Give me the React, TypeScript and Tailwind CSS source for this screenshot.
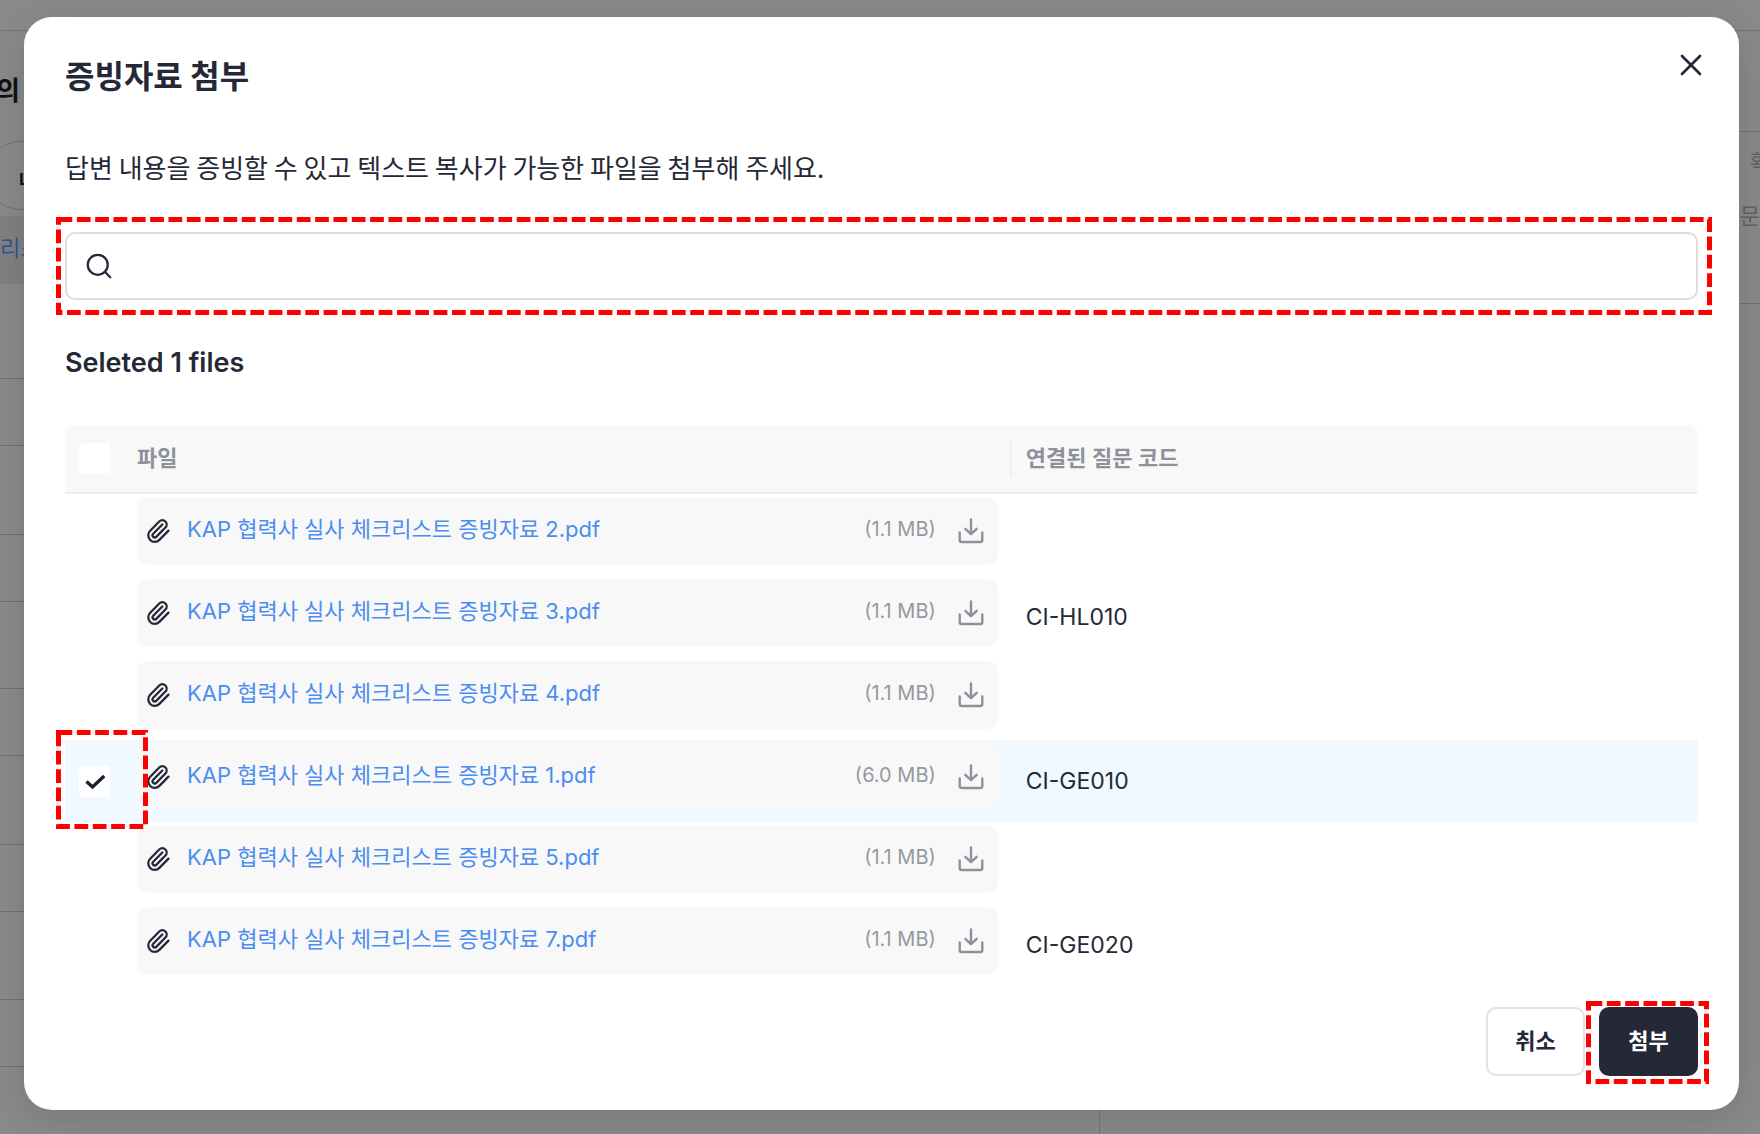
import React, { useState } from 'react';
import { Paperclip, Search, X } from 'lucide-react';

const files = [
  { name: 'KAP 협력사 실사 체크리스트 증빙자료 2.pdf', size: '1.1 MB', code: '' },
  { name: 'KAP 협력사 실사 체크리스트 증빙자료 3.pdf', size: '1.1 MB', code: 'CI-HL010' },
  { name: 'KAP 협력사 실사 체크리스트 증빙자료 4.pdf', size: '1.1 MB', code: '' },
  { name: 'KAP 협력사 실사 체크리스트 증빙자료 1.pdf', size: '6.0 MB', code: 'CI-GE010' },
  { name: 'KAP 협력사 실사 체크리스트 증빙자료 5.pdf', size: '1.1 MB', code: '' },
  { name: 'KAP 협력사 실사 체크리스트 증빙자료 7.pdf', size: '1.1 MB', code: 'CI-GE020' },
];

function DownloadIcon() {
  return (
    <svg width="26" height="26" viewBox="0 0 26 26" fill="none" stroke="#8e919b" strokeWidth="2.4" strokeLinecap="round" strokeLinejoin="round" aria-hidden="true">
      <path d="M13 1.500v14.500M7.300 10.800l5.700 5.400 5.700-5.400" />
      <path d="M1.700 14.500v7.500a2 2 0 0 0 2 2h18.600a2 2 0 0 0 2-2v-7.500" />
    </svg>
  );
}

// dashed red frame drawn around its relative parent
function Highlight({ className }: { className: string }) {
  return (
    <div className={`pointer-events-none absolute z-10 p-[2px] ${className}`}>
      <svg className="block h-full w-full overflow-visible" aria-hidden="true">
        <rect x="0.5" y="0.5" width="100%" height="100%" fill="none" stroke="#ff0000" strokeWidth="5" strokeDasharray="13.75 4.58" />
      </svg>
    </div>
  );
}

function CheckBox({ label, checked, onChange }: { label: string; checked: boolean; onChange: () => void }) {
  return (
    <label className="relative block size-[31px]">
      <input
        type="checkbox"
        aria-label={label}
        checked={checked}
        onChange={onChange}
        className="block size-full appearance-none rounded bg-white"
      />
      {checked && (
        <svg className="pointer-events-none absolute inset-0" width="31" height="31" viewBox="0 0 31 31" fill="none" stroke="#1c1f2e" strokeWidth="3.4" aria-hidden="true">
          <path d="M7.500 15.500 13.500 21 25.200 10" />
        </svg>
      )}
    </label>
  );
}

function Backdrop() {
  return (
    <div className="absolute inset-0 flex flex-col overflow-hidden bg-[#8a8a8a]" aria-hidden="true">
      <div className="h-[31px] shrink-0 border-b border-[#777]" />
      <div className="flex flex-1">
        <div className="w-[62.5%] border-r border-[#757575]">
          <div className="flex h-[185px] flex-col items-start">
            <p className="mt-9 -ml-1 text-[26px] leading-11 font-bold text-[#111]">의</p>
            <div className="mt-[30px] -ml-[14px] flex h-[69px] w-40 items-center rounded-full border border-[#717171] pt-2 pl-8 text-[18px] font-bold text-[#111]">
              나
            </div>
          </div>
          <div className="flex h-[68px] items-center bg-[#828282] pb-2 text-[22px] text-[#2c569c]">리스트</div>
          <div className="h-[95px] border-b border-[#717171]" />
          <div className="h-[67px] border-b border-[#717171]" />
          <div className="h-[89px] border-b border-[#717171]" />
          <div className="h-[67px] border-b border-[#717171]" />
          <div className="h-[87px] border-b border-[#717171]" />
          <div className="h-[67px] border-b border-[#717171]" />
          <div className="h-[89px] border-b border-[#717171]" />
          <div className="h-[67px] border-b border-[#717171]" />
          <div className="h-[88px] border-b border-[#717171]" />
          <div className="h-[67px] border-b border-[#717171]" />
        </div>
        <div className="flex-1">
          <div className="h-[101px] border-b border-[#717171]" />
          <div className="flex h-[172px] flex-col items-end border-b border-[#717171] pt-3 text-[22px] leading-8 text-[#626262]">
            <span className="-mr-2.5">확</span>
            <span className="mt-[22px]">문</span>
          </div>
        </div>
      </div>
    </div>
  );
}

export default function App() {
  const [query, setQuery] = useState('');
  const [selected, setSelected] = useState<number[]>([3]);

  const toggle = (i: number) =>
    setSelected(selected.includes(i) ? selected.filter((n) => n !== i) : [...selected, i]);
  const toggleAll = () => setSelected(selected.length === files.length ? [] : files.map((_, i) => i));

  return (
    <main className="relative min-h-screen pt-[17px] pr-[21px] pb-6 pl-6 font-['Noto_Sans_CJK_KR',sans-serif] text-[#252837]">
      <Backdrop />
      <div
        role="dialog"
        aria-labelledby="dialog-title"
        className="relative rounded-[28px] bg-white px-[41px] pt-9 pb-[34px] shadow-[0_8px_40px_rgba(0,0,0,0.14)]"
      >
        <div className="flex items-start justify-between">
          <h1 id="dialog-title" className="font-['Inter','Noto_Sans_CJK_KR',sans-serif] text-[32px] leading-12 font-bold">증빙자료 첨부</h1>
          <button type="button" aria-label="닫기" className="-mt-1.5 -mr-[11px]">
            <X size={36} strokeWidth={1.8} />
          </button>
        </div>
        <p className="mt-[46px] text-[26px] leading-10">답변 내용을 증빙할 수 있고 텍스트 복사가 가능한 파일을 첨부해 주세요.</p>

        <div className="relative mt-[45px]">
          <label className="flex h-[68px] items-center rounded-[10px] border-2 border-[#dedede] px-[17px]">
            <Search size={30} strokeWidth={1.8} />
            <input
              type="text"
              aria-label="파일 검색"
              value={query}
              onChange={(e) => setQuery(e.target.value)}
              className="ml-3 flex-1 bg-transparent text-[22px] outline-none"
            />
          </label>
          <Highlight className="-top-[15px] -right-[13px] -bottom-[14px] -left-[9px]" />
        </div>

        <h2 className="mt-[43px] font-['Inter','Noto_Sans_CJK_KR',sans-serif] text-[27px] leading-10 font-semibold">
          Seleted {selected.length} files
        </h2>

        <table className="mt-[42px] w-full table-fixed border-separate border-spacing-0 text-left font-['Inter','Noto_Sans_CJK_KR',sans-serif]">
          <thead>
            <tr className="h-[69px] text-[22px] font-semibold text-[#8e919b]">
              <th className="w-[72px] rounded-tl-[10px] border-b-2 border-[#efefef] bg-[#f8f8f8] pl-3.5">
                <CheckBox label="전체 선택" checked={selected.length === files.length} onChange={toggleAll} />
              </th>
              <th className="w-[54%] border-b-2 border-[#efefef] bg-[#f8f8f8] font-semibold">
                <div className="mr-[7px] flex h-[37px] items-center border-r-2 border-[#efefef]">파일</div>
              </th>
              <th className="rounded-tr-[10px] border-b-2 border-[#efefef] bg-[#f8f8f8] pl-[7px] font-semibold">연결된 질문 코드</th>
            </tr>
          </thead>
          <tbody>
            {files.map((file, i) => (
              <tr key={file.name} className={selected.includes(i) ? 'h-[82px] bg-[#f0f9ff]' : 'h-[82px]'}>
                <td className="relative pl-3.5">
                  <CheckBox label={file.name} checked={selected.includes(i)} onChange={() => toggle(i)} />
                  {i === 3 && <Highlight className="-top-[10px] -right-[10px] -bottom-[6px] -left-[9px]" />}
                </td>
                <td className="pt-[3px] pr-[21px] pb-[11px]">
                  <div className="flex h-[68px] items-center rounded-[10px] bg-[#f8f8f8] pr-3.5 pl-2">
                    <Paperclip size={26} strokeWidth={2.1} />
                    <a href="#file" className="ml-4 flex-1 pb-1 text-[22px] leading-8 text-[#4b8df0]">{file.name}</a>
                    <span className="pb-1 text-[20px] leading-8 text-[#96989f]">({file.size})</span>
                    <button type="button" aria-label="다운로드" className="ml-[22px]">
                      <DownloadIcon />
                    </button>
                  </div>
                </td>
                <td className="pl-[7px] text-[23px]">{file.code}</td>
              </tr>
            ))}
          </tbody>
        </table>

        <div className="mt-[21px] flex justify-end gap-3.5 text-[22px] font-bold">
          <button type="button" className="h-[69px] w-[99px] rounded-[10px] border-2 border-[#e1e2e8] pb-1">취소</button>
          <div className="relative">
            <button type="button" className="h-[69px] w-[99px] rounded-[10px] bg-[#252837] pb-1 text-white">첨부</button>
            <Highlight className="-top-[6px] -right-[10px] -bottom-[7px] -left-[13px]" />
          </div>
        </div>
      </div>
    </main>
  );
}
